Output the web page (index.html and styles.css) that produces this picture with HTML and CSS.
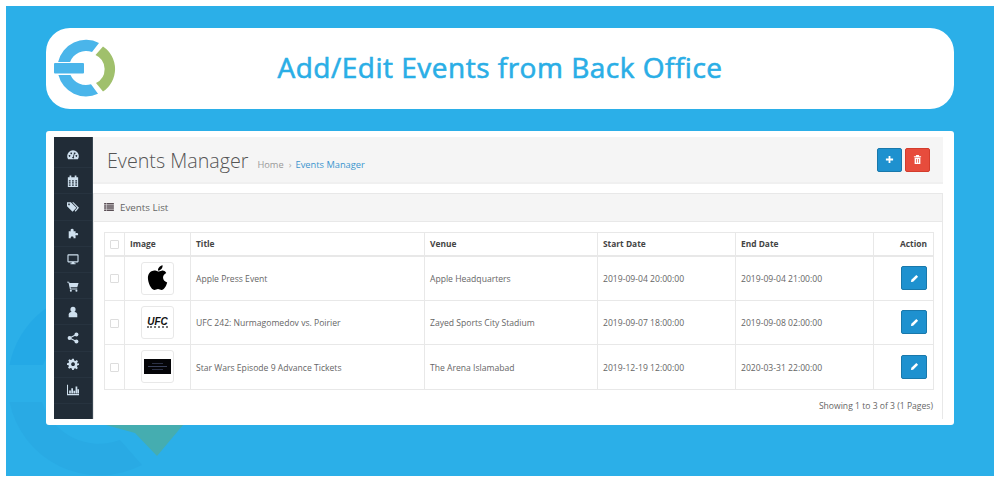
FILE: index.html
```html
<!DOCTYPE html>
<html lang="en">
<head>
<meta charset="utf-8">
<title>Add/Edit Events from Back Office</title>
<link rel="stylesheet" href="styles.css">
</head>
<body>
<main class="stage">
  <svg class="decor" viewBox="0 0 988 470" aria-hidden="true">
    <path d="M3.500 359A92 92 0 0 1 94 285L94 317A60 60 0 0 0 37 359Z" fill="#24a9e6"/>
    <path d="M3.500 396A92 92 0 0 0 136 459L114 434A60 60 0 0 1 36 396Z" fill="#29aae4"/>
    <path d="M100 419H177L151 450L129 427Z" fill="#45adb0"/>
  </svg>
  <header class="banner">
    <svg class="logo" viewBox="50 36 70 66" aria-hidden="true">
      <path d="M99 43A28.500 28.500 0 0 0 58.100 62L70.100 62A17 17 0 0 1 92 52Z" fill="#4ab5ea"/>
      <path d="M98 93.800A28.500 28.500 0 0 1 58.400 75L70.500 75A17 17 0 0 0 91 84.300Z" fill="#4ab5ea"/>
      <rect x="54" y="63" width="30" height="10.500" rx="1" fill="#4ab5ea"/>
      <path d="M103 46.500A27 27 0 0 1 103 91.500L96 83A15.500 15.500 0 0 0 95.500 55Z" fill="#a0c06c"/>
    </svg>
    <h1 class="banner-title">Add/Edit Events from Back Office</h1>
  </header>
  <section class="shot">
    <nav class="side">
      <a class="side-item"><svg viewBox="0 0 14 14"><path fill-rule="evenodd" d="M7 1.500A6.800 6.800 0 0 0 .2 8.300c0 1.400.4 2.700 1.100 3.700h11.400c.7-1 1.100-2.300 1.100-3.700A6.800 6.800 0 0 0 7 1.500zM3 7a1 1 0 1 1-.1 0zM5 4a1 1 0 1 1-.1 0zM9 4a1 1 0 1 1-.1 0zM11 7a1 1 0 1 1-.1 0zM6 10.500a1.300 1.300 0 0 1 1-1.500l1-3.500.8.200-.9 3.600a1.300 1.300 0 0 1 .2 1.700z"/></svg></a>
      <a class="side-item"><svg viewBox="0 0 14 14"><path fill-rule="evenodd" d="M3 .5h2v2H3zM9 .5h2v2H9zM1 2.500h12V14H1zM2.200 6v1.500h2V6zm3.700 0v1.500h2V6zm3.800 0v1.500h2V6zM2.200 8.500V10h2V8.500zm3.700 0V10h2V8.500zm3.800 0V10h2V8.500zM2.200 11v1.500h2V11zm3.700 0v1.500h2V11zm3.800 0v1.500h2V11z"/></svg></a>
      <a class="side-item"><svg viewBox="0 0 14 14"><path fill-rule="evenodd" d="M0 1.500h4.500l6.500 6.500-4.500 4.500L0 6zM2.300 3a1 1 0 1 0 .1 0z"/><path d="M6 1.500h1.500L14 8l-4 4.500-1-1 3-3.500z"/></svg></a>
      <a class="side-item"><svg viewBox="0 0 14 14"><path d="M2 5h2.500C3.800 3.500 4.300 2 6 2s2.200 1.500 1.500 3H10v2.500c1-.8 3-.6 3 .9s-2 1.700-3 .9V13H7.500c.5-1.200 0-2-1.500-2s-2 .8-1.500 2H2z"/></svg></a>
      <a class="side-item"><svg viewBox="0 0 14 14"><path fill-rule="evenodd" d="M1.500 1.500h11c.6 0 1 .4 1 1v7.500c0 .6-.4 1-1 1H8.500v1H10v1H4v-1h1.500v-1h-4c-.6 0-1-.4-1-1V2.500c0-.6.4-1 1-1zM1.800 2.800v6.900h10.400V2.800z"/></svg></a>
      <a class="side-item"><svg viewBox="0 0 14 14"><path d="M0 2h2.500l.4 1.500H13.500L12 8.500H4.200l.3 1.500H12v1H3.500L1.700 3H0z"/><circle cx="4.500" cy="12.500" r="1.200"/><circle cx="11" cy="12.500" r="1.200"/></svg></a>
      <a class="side-item"><svg viewBox="0 0 14 14"><circle cx="7" cy="4" r="3"/><path d="M2 13V10c0-2 1.500-3 3-3h4c1.500 0 3 1 3 3v3z"/></svg></a>
      <a class="side-item"><svg viewBox="0 0 14 14"><circle cx="11" cy="3" r="2.300"/><circle cx="3" cy="7" r="2.300"/><circle cx="11" cy="11" r="2.300"/><path d="M3 7 11 3M3 7l8 4" stroke="currentColor" stroke-width="1.300"/></svg></a>
      <a class="side-item"><svg viewBox="0 0 14 14"><path fill-rule="evenodd" d="M6 1h2l.4 1.800 1.400.6 1.600-1 1.400 1.400-1 1.600.6 1.400L14 6.200v2l-1.800.4-.6 1.400 1 1.600-1.400 1.400-1.600-1-1.400.6L8 14H6l-.4-1.800-1.400-.6-1.600 1-1.400-1.400 1-1.600-.6-1.400L0 8.200v-2l1.800-.4.6-1.400-1-1.600L2.800 1.400l1.600 1 1.400-.6zM7 5a2.200 2.200 0 1 0 .1 0z"/></svg></a>
      <a class="side-item"><svg viewBox="0 0 14 14"><path d="M0 1h1.200v10.800H14V13H0zM2.500 7.500h2V11h-2zM5 5h2v6H5zM7.500 8h2v3h-2zM10 3h2v8h-2zM12.300 6H14v5h-1.700z"/></svg></a>
    </nav>
    <div class="content">
      <div class="page-head">
        <div class="crumbs">
          <h2 class="page-title">Events Manager</h2>
          <span class="crumb">Home</span>
          <span class="crumb-sep">›</span>
          <span class="crumb-active">Events Manager</span>
        </div>
        <div class="head-actions">
          <button class="btn btn-blue"><svg viewBox="0 0 10 10"><path d="M4 1h2v3h3v2H6v3H4V6H1V4h3z"/></svg></button>
          <button class="btn btn-red"><svg viewBox="0 0 10 10"><path fill-rule="evenodd" d="M3.500 0h3l.5 1.500h2v1H1v-1h2zM1.800 3h6.400v7H1.800zM3.500 4.500v4h.8v-4zm2.200 0v4h.8v-4z"/></svg></button>
        </div>
      </div>
      <div class="panel">
        <div class="panel-head">
          <svg class="list-icon" viewBox="0 0 11 9"><path d="M0 0h2.500v1.800H0zM3 0h8v1.800H3zM0 2.400h2.500v1.800H0zM3 2.400h8v1.800H3zM0 4.800h2.500v1.800H0zM3 4.800h8v1.800H3zM0 7.200h2.500V9H0zM3 7.200h8V9H3z"/></svg>
          <span>Events List</span>
        </div>
        <div class="panel-body">
          <table class="events">
            <colgroup>
              <col class="c-check"><col class="c-image"><col class="c-title"><col class="c-venue"><col class="c-date"><col class="c-date"><col class="c-action">
            </colgroup>
            <thead>
              <tr><th class="center"><span class="check"></span></th><th>Image</th><th>Title</th><th>Venue</th><th>Start Date</th><th>End Date</th><th class="right">Action</th></tr>
            </thead>
            <tbody>
              <tr>
                <td class="center"><span class="check"></span></td>
                <td class="center"><span class="thumb"><svg class="apple" viewBox="0 0 24 28"><path d="M12 7c-2-1-3.200-1.200-5-1C3 6.500 1 10 1 14c0 5 3.500 13 7 13 1.500 0 2.500-1 4-1s2.500 1 4 1c2.500 0 5-4 6-8-3-1.200-4.500-3-4.500-5.500 0-2.200 1.200-3.800 3.500-5C19.500 6 17.500 5.500 16 6c-1.500.4-2.800 1-4 1zM12 6c-.2-3 2-5.500 5-6 .3 3-2 5.700-5 6z"/></svg></span></td>
                <td class="cell-text">Apple Press Event</td><td class="cell-text">Apple Headquarters</td><td class="cell-text">2019-09-04 20:00:00</td><td class="cell-text">2019-09-04 21:00:00</td>
                <td class="right"><button class="btn btn-blue"><svg viewBox="0 0 10 10"><path d="M7 1l2 2-5.500 5.500L1 9l.5-2.500z"/></svg></button></td>
              </tr>
              <tr>
                <td class="center"><span class="check"></span></td>
                <td class="center"><span class="thumb"><span class="ufc">UFC</span></span></td>
                <td class="cell-text">UFC 242: Nurmagomedov vs. Poirier</td><td class="cell-text">Zayed Sports City Stadium</td><td class="cell-text">2019-09-07 18:00:00</td><td class="cell-text">2019-09-08 02:00:00</td>
                <td class="right"><button class="btn btn-blue"><svg viewBox="0 0 10 10"><path d="M7 1l2 2-5.500 5.500L1 9l.5-2.500z"/></svg></button></td>
              </tr>
              <tr>
                <td class="center"><span class="check"></span></td>
                <td class="center"><span class="thumb"><span class="sw"></span></span></td>
                <td class="cell-text">Star Wars Episode 9 Advance Tickets</td><td class="cell-text">The Arena Islamabad</td><td class="cell-text">2019-12-19 12:00:00</td><td class="cell-text">2020-03-31 22:00:00</td>
                <td class="right"><button class="btn btn-blue"><svg viewBox="0 0 10 10"><path d="M7 1l2 2-5.500 5.500L1 9l.5-2.500z"/></svg></button></td>
              </tr>
            </tbody>
          </table>
          <p class="pager">Showing 1 to 3 of 3 (1 Pages)</p>
        </div>
      </div>
    </div>
  </section>
</main>
</body>
</html>
```
FILE: styles.css
```css
* { box-sizing: border-box; }
html, body { margin: 0; height: 100%; }
body { background: #fff; font-family: "Open Sans", "Liberation Sans", sans-serif; overflow: hidden; }
.stage {
  position: relative;
  width: 988px; height: 470px; margin: 6px;
  padding: 22px 40px 0;
  background: #2bafe8;
  display: flex; flex-direction: column; gap: 22px;
  overflow: hidden;
}
.decor { position: absolute; inset: 0; width: 988px; height: 470px; }
.banner {
  position: relative;
  height: 81px;
  background: #fff;
  border-radius: 24px;
  display: flex; align-items: center; justify-content: center;
  padding-bottom: 3px;
}
.logo { position: absolute; left: 4px; top: 8px; width: 70px; height: 66px; }
.banner-title { margin: 0; font-size: 28px; font-weight: 400; color: #2aaee6; letter-spacing: .5px; -webkit-text-stroke: .6px #2aaee6; }
.shot {
  position: relative;
  height: 294px;
  background: #fff;
  border-radius: 3px;
  padding: 6px 11px 6px 8px;
  display: flex;
}
.side { width: 39px; background: #212c37; border-right: 1px solid #3a4752; padding-top: 5px; }
.side-item {
  display: flex; align-items: center; justify-content: center;
  height: 26.2px; color: #cfe0ee;
  border-bottom: 1px solid #27333f;
}
.side-item svg { width: 12px; height: 12px; fill: currentColor; }
.content { flex: 1; display: flex; flex-direction: column; min-width: 0; }
.page-head {
  height: 47px;
  background: #f5f5f5;
  display: flex; align-items: center; justify-content: space-between;
  padding: 0 13px 0 14px;
  border-bottom: 2px solid #f0f0f0;
}
.crumbs { display: flex; align-items: baseline; font-size: 9.3px; padding-top: 2px; }
.page-title { margin: 0 9px 0 0; font-size: 19.7px; font-weight: 300; color: #555; }
.crumb { color: #999; }
.crumb-sep { color: #aaa; margin: 0 4px 0 5px; }
.crumb-active { color: #3c96cf; }
.head-actions { display: flex; gap: 3px; }
.btn {
  width: 26px; height: 24px; padding: 0;
  border-radius: 2px; border: 1px solid;
  display: inline-flex; align-items: center; justify-content: center;
}
.head-actions .btn { width: 25px; }
.btn svg { width: 9px; height: 9px; fill: #fff; }
.btn-blue { background: #1e91cf; border-color: #1978ab; }
.btn-red { background: #e74c3c; border-color: #d33c2c; }
.panel { margin-top: 9px; flex: 1; border-left: 1px solid #e8e8e8; border-right: 1px solid #e8e8e8; }
.panel-head {
  height: 29px;
  background: #f5f5f5;
  border-top: 1px solid #e8e8e8; border-bottom: 1px solid #e8e8e8;
  display: flex; align-items: center; gap: 6px;
  padding: 0 0 1px 10px;
  font-size: 9.800px; color: #666;
}
.list-icon { width: 10px; height: 8px; fill: #5a4f55; }
.panel-body { padding: 10px 10px 0; }
.events { width: 829px; table-layout: fixed; border-collapse: collapse; font-size: 8.600px; color: #666; }
.c-check { width: 20px; } .c-image { width: 66px; } .c-title { width: 234px; }
.c-venue { width: 173px; } .c-date { width: 138px; } .c-action { width: 60px; }
.events th, .events td { border: 1px solid #e8e8e8; padding: 0 5px; text-align: left; }
.events thead th { height: 23px; border-bottom-width: 2px; font-weight: 700; color: #444; font-size: 8.400px; }
.events tbody td { height: 44.600px; }
.events .cell-text { padding-top: 2px; }
.events .center { text-align: center; padding: 0; }
.events .right { text-align: right; padding-right: 6px; }
.check { display: inline-block; width: 9px; height: 9px; border: 1px solid #ddd; border-radius: 1px; vertical-align: middle; background: #fff; }
.thumb {
  display: inline-flex; align-items: center; justify-content: center;
  width: 33px; height: 33px; border: 1px solid #e8e8e8; border-radius: 3px; vertical-align: middle; background: #fff;
}
.apple { width: 22px; height: 26px; fill: #000; }
.ufc { font-family: "Liberation Sans", sans-serif; font-size: 10px; font-weight: 700; font-style: italic; color: #111; border-bottom: 2px dotted #777; line-height: 9px; }
.sw { display: block; width: 27px; height: 15px; background: linear-gradient(90deg, transparent 0 4px, #39405a 4px 23px, transparent 23px) center 7px / 100% 1px no-repeat, linear-gradient(90deg, transparent 0 8px, #2c3146 8px 19px, transparent 19px) center 4px / 100% 1px no-repeat, linear-gradient(90deg, transparent 0 8px, #2c3146 8px 19px, transparent 19px) center 10px / 100% 1px no-repeat, #050508; }
.pager { margin: 10px -1px 0 0; text-align: right; font-size: 8.600px; color: #666; }
```
